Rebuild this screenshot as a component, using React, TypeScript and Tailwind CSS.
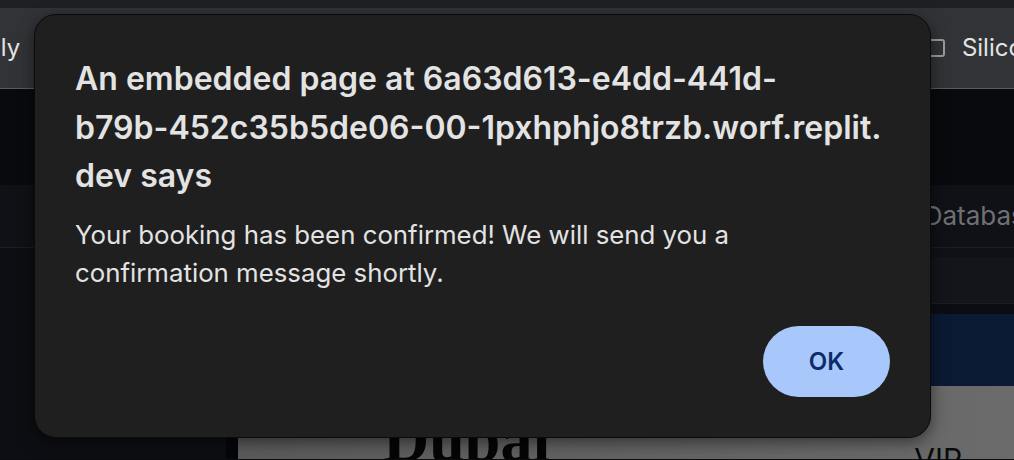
import React from "react";

export default function App() {
  return (
    <div className="relative w-[1014px] h-[460px] overflow-hidden bg-[#0b0c10] font-['Inter','Noto_Sans',sans-serif]">
      {/* top strip */}
      <div className="h-[8px] bg-[#1f2023]" />
      {/* toolbar */}
      <div className="h-[81px] bg-[#323337] border-b border-[#5a5b5f] flex items-center justify-between">
        <span className="ml-[-14px] text-[24px] text-[#e3e3e3] leading-none">ply</span>
        <div className="flex items-center gap-[17px] mr-[-23px]">
          <div className="w-[18px] h-[18px] rounded-[3px] border-2 border-[#9b9b9b]" />
          <span className="text-[24px] text-[#e3e3e3] leading-none">Silicon</span>
        </div>
      </div>
      {/* page */}
      <div className="h-[96px] bg-[#090a0e]" />
      <div className="h-[63px] bg-[#101116] border-b border-[#1c1d22] flex items-center justify-end">
        <span className="mr-[-26px] text-[26px] text-[#6f7074] leading-none">Database</span>
      </div>
      <div className="flex h-[211px]">
        <div className="w-[226px] bg-[#0d0e13]" />
        <div className="w-[12px] bg-[#05060a]" />
        <div className="flex-1 flex flex-col">
          <div className="h-[9px] bg-[#101116]" />
          <div className="h-[47px] bg-[#14151a] border-b border-[#1d1e23]" />
          <div className="h-[10px] bg-[#0c0d12]" />
          <div className="h-[72px] bg-[#0b1a33]" />
          <div className="flex-1 bg-[#656565] bg-gradient-to-r from-[#5a5a5a] to-[#6b6b6b] flex items-start overflow-hidden">
            <span className="ml-[145px] mt-[22px] text-[64px] font-bold leading-none text-[#050505] font-['Liberation_Serif',serif]">Dubai</span>
            <span className="ml-[364px] mt-[58px] text-[30px] leading-none text-[#0a0a0a]">VIP</span>
          </div>
        </div>
      </div>

      {/* alert dialog */}
      <div className="absolute left-[34px] top-[14px] w-[897px] h-[424px] rounded-[22px] bg-[#1f1f1f] border border-[#0a0a0a] shadow-[0_4px_16px_rgba(0,0,0,0.5)] px-[40px] pt-[40px] flex flex-col">
        <div className="text-[32px] font-semibold leading-[48.5px] text-[#e3e3e3]">
          <div>An embedded page at 6a63d613-e4dd-441d-</div>
          <div className="whitespace-nowrap">b79b-452c35b5de06-00-1pxhphjo8trzb.worf.replit.</div>
          <div>dev says</div>
        </div>
        <div className="mt-[15px] text-[25.8px] leading-[38px] text-[#e3e3e3]">
          <div>Your booking has been confirmed! We will send you a</div>
          <div>confirmation message shortly.</div>
        </div>
        <div className="flex justify-end mt-auto mb-[40px]">
          <button className="w-[127px] h-[71px] rounded-full bg-[#a8c7fa] text-[#0b2c6c] text-[24px] font-semibold">
            OK
          </button>
        </div>
      </div>
    </div>
  );
}
